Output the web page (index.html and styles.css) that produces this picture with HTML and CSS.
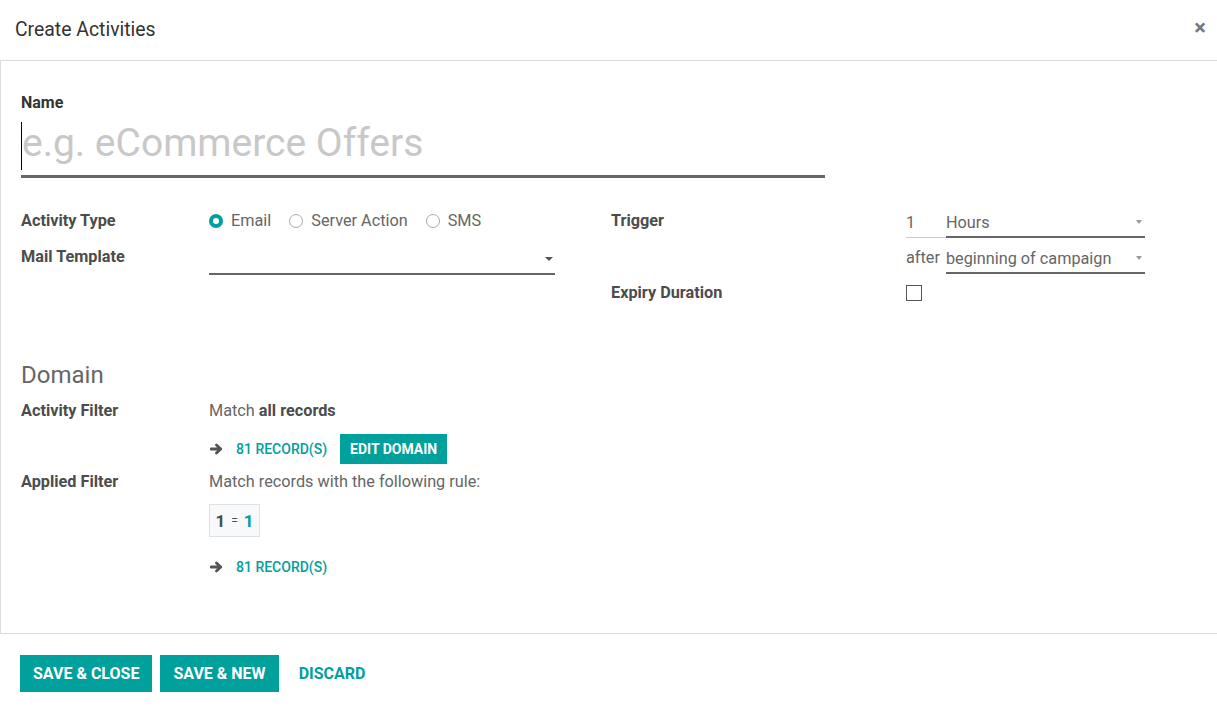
FILE: index.html
```html
<!DOCTYPE html>
<html>
<head>
<meta charset="utf-8">
<link rel="stylesheet" href="styles.css">
</head>
<body>
<div class="modal">
  <header class="modal-header">
    <h4 class="title">Create Activities</h4>
    <span class="close">×</span>
  </header>
  <main class="modal-body">
    <label class="name-label">Name</label>
    <div class="name-input"><span class="cursor"></span><span class="placeholder">e.g. eCommerce Offers</span></div>

    <div class="groups">
      <div class="group left">
        <div class="lbl">Activity Type</div>
        <div class="val radios">
          <span class="radio"><span class="dot on"></span>Email</span>
          <span class="radio"><span class="dot"></span>Server Action</span>
          <span class="radio"><span class="dot"></span>SMS</span>
        </div>
        <div class="lbl">Mail Template</div>
        <div class="val"><div class="select"><span></span><span class="caret"></span></div></div>
      </div>
      <div class="group right">
        <div class="lbl">Trigger</div>
        <div class="val trig">
          <span class="num">1</span>
          <div class="select"><span>Hours</span><span class="caret small"></span></div>
        </div>
        <div class="lbl"></div>
        <div class="val trig">
          <span class="after">after</span>
          <div class="select"><span>beginning of campaign</span><span class="caret small"></span></div>
        </div>
        <div class="lbl">Expiry Duration</div>
        <div class="val"><span class="checkbox"></span></div>
      </div>
    </div>

    <h3 class="section">Domain</h3>
    <div class="domain">
      <div class="lbl">Activity Filter</div>
      <div class="val">
        <div class="text">Match <b>all records</b></div>
        <div class="records">
          <svg class="arrow" width="13" height="12" viewBox="0 0 13 12"><path d="M1 6h9.5M6.5 2l4.2 4-4.2 4" fill="none" stroke="#555" stroke-width="2.8" stroke-linecap="round" stroke-linejoin="round"/></svg>
          <span class="link">81 RECORD(S)</span>
          <span class="btn small">EDIT DOMAIN</span>
        </div>
      </div>
      <div class="lbl">Applied Filter</div>
      <div class="val">
        <div class="text">Match records with the following rule:</div>
        <div class="rule"><b>1</b><span class="eq">=</span><b class="teal">1</b></div>
        <div class="records last">
          <svg class="arrow" width="13" height="12" viewBox="0 0 13 12"><path d="M1 6h9.5M6.5 2l4.2 4-4.2 4" fill="none" stroke="#555" stroke-width="2.8" stroke-linecap="round" stroke-linejoin="round"/></svg>
          <span class="link">81 RECORD(S)</span>
        </div>
      </div>
    </div>
  </main>
  <footer class="modal-footer">
    <span class="btn">SAVE &amp; CLOSE</span>
    <span class="btn">SAVE &amp; NEW</span>
    <span class="btn-link">DISCARD</span>
  </footer>
</div>
</body>
</html>
```

FILE: styles.css
```css
* { box-sizing: border-box; }
body {
  margin: 0;
  font-family: Roboto, "Noto Sans", sans-serif;
  font-size: 16.25px;
  color: #666;
  background: #fff;
  overflow: hidden;
}
.modal { width: 1217px; height: 718px; }
.modal-header {
  height: 61px;
  display: flex;
  align-items: center;
  justify-content: space-between;
  padding: 0 11px 0 15px;
  border-bottom: 1px solid #d9dbe1;
}
.title {
  margin: 0;
  font-size: 19.4px;
  font-weight: 400;
  color: #333;
  padding-bottom: 1px;
}
.close {
  font-size: 22px;
  font-weight: 700;
  color: #777;
  line-height: 1;
  padding-bottom: 4px;
}
.modal-body {
  height: 573px;
  border-left: 1px solid #d9dbe1;
  border-bottom: 1px solid #d9dbe1;
  padding: 33px 20px 0 20px;
}
.name-label {
  display: block;
  font-weight: 700;
  font-size: 16px;
  color: #333;
  line-height: 18px;
}
.name-input {
  width: 804px;
  height: 66px;
  border-bottom: 3px solid #666;
  display: flex;
  align-items: center;
  position: relative;
}
.cursor { position: absolute; left: 0; top: 10px; width: 1px; height: 48px; background: #000; }
.placeholder { font-size: 39px; color: #c8c8c8; margin-left: 1px; padding-bottom: 1px; }

.groups { display: flex; margin-top: 31px; align-items: flex-start; }
.group { display: grid; align-items: start; }
.group.left { grid-template-columns: 188px 346px; grid-template-rows: 24px 30px; row-gap: 12px; width: 590px; }
.group.right { grid-template-columns: 295px 239px; grid-template-rows: 30px 30px 24px; row-gap: 6px; }
.group.right > :nth-child(5), .group.right > :nth-child(6) { margin-top: 0; }
.group.right > .trig { margin-top: -1px; }
.lbl { font-weight: 700; color: #4c4c4c; line-height: 24px; }
.radios { display: flex; gap: 18px; line-height: 24px; }
.radio { display: flex; align-items: center; }
.dot {
  width: 14px; height: 14px; border-radius: 50%;
  border: 1px solid #aaa; margin-right: 8px; background: #fff;
}
.dot.on { border: 4px solid #00a09d; }
.select {
  display: flex; justify-content: space-between; align-items: center;
  border-bottom: 2px solid #666; height: 30px; flex: 1;
}
.caret { width: 0; height: 0; border-left: 4px solid transparent; border-right: 4px solid transparent; border-top: 4px solid #555; margin-right: 2px; }
.caret.small { border-width: 4px 3px 0; border-top-color: #999; margin-right: 3px; }
.trig { display: flex; align-items: flex-end; }
.num { width: 40px; border-bottom: 1px solid #ccc; height: 29px; line-height: 28px; }
.after { width: 40px; line-height: 28px; height: 30px; }
.checkbox { display: block; width: 16px; height: 16px; border: 1px solid #555; margin-top: 4px; }

.section { margin: 54px 0 0; font-size: 24px; font-weight: 400; color: #666; line-height: 32px; }
.domain { display: grid; grid-template-columns: 188px auto; margin-top: 8px; }
.domain .lbl { line-height: 24px; }
.domain .val .text { line-height: 24px; }
.domain .val .text b { color: #4c4c4c; }
.records { display: flex; align-items: center; height: 30px; margin: 11px 0 6px; }
.records .arrow { margin: 0 13px 0 1px; }
.link { color: #00a09d; font-weight: 500; font-size: 14px; margin-right: 13px; }
.btn {
  display: inline-flex; align-items: center; justify-content: center;
  background: #00a09d; color: #fff; font-weight: 700; font-size: 16px;
  height: 37px; padding: 0 13px;
}
.btn.small { font-size: 14px; height: 30px; padding: 0 10px; }
.rule {
  display: flex; align-items: center; gap: 6px;
  margin-top: 10px;
  height: 33px; width: 51px; justify-content: center;
  background: #f8f9fa; border: 1px solid #dee2e6; color: #4c4c4c; font-size: 17px;
}
.rule .eq { font-size: 12px; }
.rule .teal { color: #00a09d; }
.records.last { margin-top: 15px; }
.modal-footer { display: flex; align-items: center; gap: 8px; padding: 21px 20px; }
.btn-link { color: #00a09d; font-weight: 700; font-size: 16px; margin-left: 12px; }
```
